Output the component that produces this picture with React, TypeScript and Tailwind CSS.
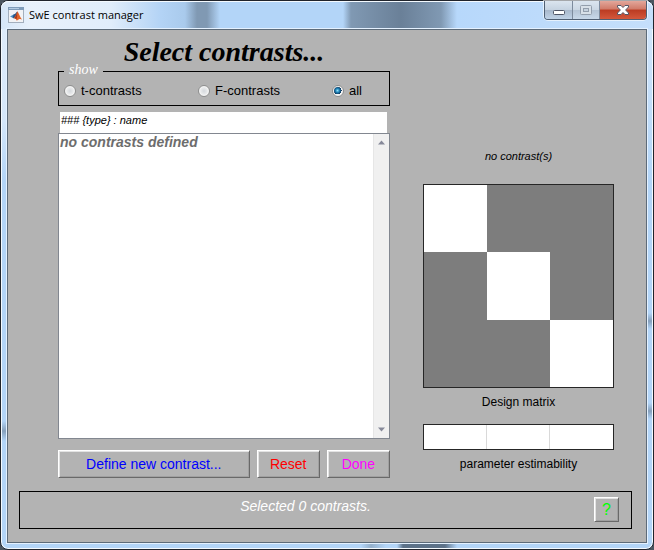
import React from "react";

const sans = "font-['Liberation_Sans',Arial,sans-serif]";
const serif = "font-['Liberation_Serif','Times_New_Roman',serif]";

const raised =
  "border border-t-white border-l-white border-r-[#696969] border-b-[#696969] bg-[#b3b3b3] shadow-[inset_1px_1px_0_#e3e3e3,inset_-1px_-1px_0_#a0a0a0]";

function MatlabIcon() {
  return (
    <svg width="16" height="16" viewBox="0 0 16 16" aria-hidden="true">
      <rect x="0.5" y="0.5" width="15" height="15" fill="#f1f3f6" stroke="#a3afbd" />
      <rect x="0" y="0" width="16" height="3" fill="#7f9cba" />
      <rect x="1" y="1" width="10" height="1" fill="#b4cbe2" />
      <path d="M2 9.5 L5.5 7.6 L7.5 9.2 L5.5 11.2 Z" fill="#4a90c4" />
      <path d="M5.5 7.6 L7.2 6.8 L9.3 4.2 L8.6 8.4 L6 11.4 L4.6 10.2Z" fill="#2b5788" />
      <path d="M9.3 4.2 C10.8 5.6 11.6 9.4 14 12.6 C12.2 11.4 11 11.8 8.8 13.8 C8.2 12 7.2 11.2 5.6 11.3 C7.8 9.6 8.3 6.6 9.3 4.2Z" fill="#e2652a" />
      <path d="M9.2 4.8 C9.4 7.6 9.2 10 8.4 12.6 C8 11.8 7.2 11.2 6.2 11.2 C8 9.4 8.6 7.2 9.2 4.8Z" fill="#a8381c" />
    </svg>
  );
}

function TitleBar() {
  return (
    <header className="flex h-7 items-start justify-between rounded-t-lg bg-[linear-gradient(90deg,#d5e6f8_0,#e8f1fb_30px,#e0edfb_110px,#b3d3f5_160px,#a9caec_184px,#8099b3_196px,#8099b3_206px,#b3d5f8_219px,#b3d5f8_342px,#8099b3_350px,#6a8098_400px,#8099b3_440px,#b7d8fb_456px,#c5dffb_100%)] pl-[7px] shadow-[inset_0_1px_0_#f4faff]">
      <div className="flex items-center gap-[5px] pt-1.5">
        <MatlabIcon />
        <h1 className="font-['Open_Sans','Noto_Sans',sans-serif] text-[11px] leading-4 text-black">SwE contrast manager</h1>
      </div>
      <div className="mr-1.5 flex h-[19px] overflow-hidden rounded-b border border-t-0 border-[#4f5f73] shadow-[0_0_0_1px_#ffffff99]">
        <button type="button" aria-label="Minimize" className="flex w-7 items-center justify-center border-r border-[#7d8b9d] bg-[linear-gradient(180deg,#dbe5ef_0,#c6d3e1_48%,#a9b9cc_52%,#c0d2e6_100%)]">
          <svg width="12" height="5" viewBox="0 0 12 5" className="mt-1">
            <rect x="0.5" y="0.5" width="11" height="4" rx="1" fill="#fff" stroke="#4f5566" />
          </svg>
        </button>
        <button type="button" aria-label="Maximize" disabled className="flex w-[27px] items-center justify-center border-r border-[#7d8b9d] bg-[linear-gradient(180deg,#dbe5ef_0,#ccd8e4_48%,#b5c4d5_52%,#c8d8e9_100%)]">
          <svg width="12" height="10" viewBox="0 0 12 10">
            <rect x="0.5" y="0.5" width="11" height="9" rx="1" fill="#d8e0e8" stroke="#939eac" />
            <rect x="3.5" y="3.5" width="5" height="3" fill="#c6d2de" stroke="#939eac" />
          </svg>
        </button>
        <button type="button" aria-label="Close" className="flex w-[46px] items-center justify-center bg-[linear-gradient(180deg,#e3a79b_0,#d07a69_45%,#bb3b22_50%,#d4583c_100%)]">
          <svg width="12" height="10" viewBox="0 0 12 10">
            <path d="M0.5 0.5 H4 L6 2.5 L8 0.5 H11.5 V2 L8.6 5 L11.5 8 V9.5 H8 L6 7.5 L4 9.5 H0.5 V8 L3.4 5 L0.5 2 Z" fill="#fff" stroke="#535666" />
          </svg>
        </button>
      </div>
    </header>
  );
}

function Radio({ label, checked }: { label: string; checked?: boolean }) {
  return (
    <label className="flex items-center gap-[5px]">
      <input
        type="radio"
        name="show"
        defaultChecked={checked}
        className="size-3 appearance-none rounded-full border border-[#8e8f8f] bg-[radial-gradient(circle,#d4d8dc_0,#f4f4f4_5px)] shadow-[inset_0_0_0_1px_#f4f4f4] checked:bg-[radial-gradient(circle_at_45%_45%,#8fe0fa_0,#1c80b4_2px,#0c2c50_4px,#f4f4f4_4px)]"
      />
      {label}
    </label>
  );
}

function ContrastList() {
  return (
    <div className="flex h-[306px] border border-[#828790] bg-white">
      <select
        size={2}
        aria-label="Contrasts"
        className="min-w-0 flex-1 appearance-none overflow-hidden bg-white text-sm leading-5 outline-none"
      >
        <option disabled className="p-0 pl-px leading-5 font-bold text-[#6d6d6d] italic">no contrasts defined</option>
      </select>
      <div className="flex w-4 flex-col items-center justify-between border-l border-[#e6e6e6] bg-[#f0f0f0] py-1.5">
        <svg width="7" height="5" viewBox="0 0 7 5"><path d="M0 4.5 L3.5 0.5 L7 4.5Z" fill="#868999" /></svg>
        <svg width="7" height="5" viewBox="0 0 7 5"><path d="M0 0.5 L3.5 4.5 L7 0.5Z" fill="#868999" /></svg>
      </div>
    </div>
  );
}

function DesignMatrix() {
  const rows = [0, 1, 2];
  return (
    <div role="img" aria-label="Design matrix" className="grid h-[204px] grid-cols-3 grid-rows-3 border border-[#262626]">
      {rows.map((r) =>
        rows.map((c) => <div key={`${r}-${c}`} className={r === c ? "bg-white" : "bg-[#7d7d7d]"} />)
      )}
    </div>
  );
}

export default function App() {
  return (
    <div className="min-h-screen bg-[#4a5560]">
      <div
        className={`flex min-h-screen flex-col rounded-lg border border-[#20242c] bg-[#b9d7f7] bg-[linear-gradient(180deg,#e0edfb_0,#d5e7fa_120px,#b3d5f8_180px,#b3d5f8_420px,#86a0bc_430px,#b3d5f8_440px),linear-gradient(180deg,#d5e7fa_0,#b3d5f8_180px,#b3d5f8_312px,#86a0bc_320px,#b3d5f8_328px,#b3d5f8_402px,#86a0bc_410px,#b3d5f8_418px),linear-gradient(90deg,#b3d5f8_360px,#94b0cc_370px,#b3d5f8_385px,#b3d5f8_396px,#5d7289_402px,#5d7289_444px,#b3d5f8_456px)] bg-[length:7px_530px,7px_530px,100%_100%] bg-[position:left_top,right_top,left_top] bg-no-repeat text-black shadow-[inset_0_0_0_1px_#f4faff] ${sans}`}
      >
        <TitleBar />
        <main className="mx-1.5 mb-1.5 flex-1 border border-[#5d6b79] bg-[#b3b3b3] pr-3.5 pb-[13px] pl-[11px] shadow-[0_0_0_1px_#e4f1ff]">
          <div className="grid grid-cols-[332fr_191fr] gap-x-[33px] pr-[18px] pl-[39px]">
            <section>
              <h2 className={`h-[35px] pt-1.5 text-center text-[28px] leading-8 font-bold italic ${serif}`}>Select contrasts...</h2>
              <fieldset className="h-[41px] border border-black px-[5px]">
                <legend className={`h-3 px-[5px] text-sm leading-[10px] text-white italic ${serif}`}>show</legend>
                <div className="grid grid-cols-[134fr_134fr_52fr] pt-1 text-[13px] leading-5">
                  <Radio label="t-contrasts" />
                  <Radio label="F-contrasts" />
                  <Radio label="all" checked />
                </div>
              </fieldset>
              <p className="mt-1.5 mr-[3px] ml-0.5 h-[21px] bg-white pl-px text-[11px] leading-4 italic">### {"{type}"} : name</p>
              <ContrastList />
              <div className="mt-[11px] grid h-7 grid-cols-[191fr_63fr_63fr] gap-[7px] text-sm leading-5">
                <button type="button" className={`text-[#0000ff] ${raised}`}>Define new contrast...</button>
                <button type="button" className={`text-[#ff0000] ${raised}`}>Reset</button>
                <button type="button" className={`text-[#ff00ff] ${raised}`}>Done</button>
              </div>
            </section>
            <section className="flex flex-col pt-[118px] text-center">
              <p className="mb-5 text-[11px] leading-4 italic">no contrast(s)</p>
              <DesignMatrix />
              <p className="mt-1 mb-3 text-xs leading-5">Design matrix</p>
              <div className="grid h-[26px] grid-cols-3 divide-x divide-[#d9d9d9] border border-[#262626] bg-white">
                <div />
                <div />
                <div />
              </div>
              <p className="mt-1 text-xs leading-5">parameter estimability</p>
            </section>
          </div>
          <footer className="mt-[13px] grid h-[38px] grid-cols-[1fr_auto_1fr] border border-black px-3">
            <output className="col-start-2 pt-1 pr-10 text-sm leading-5 text-white italic">Selected 0 contrasts.</output>
            <button type="button" aria-label="Help" className={`mt-[5px] size-[25px] justify-self-end text-base leading-5 text-[#00ff00] ${raised}`}>?</button>
          </footer>
        </main>
      </div>
    </div>
  );
}
